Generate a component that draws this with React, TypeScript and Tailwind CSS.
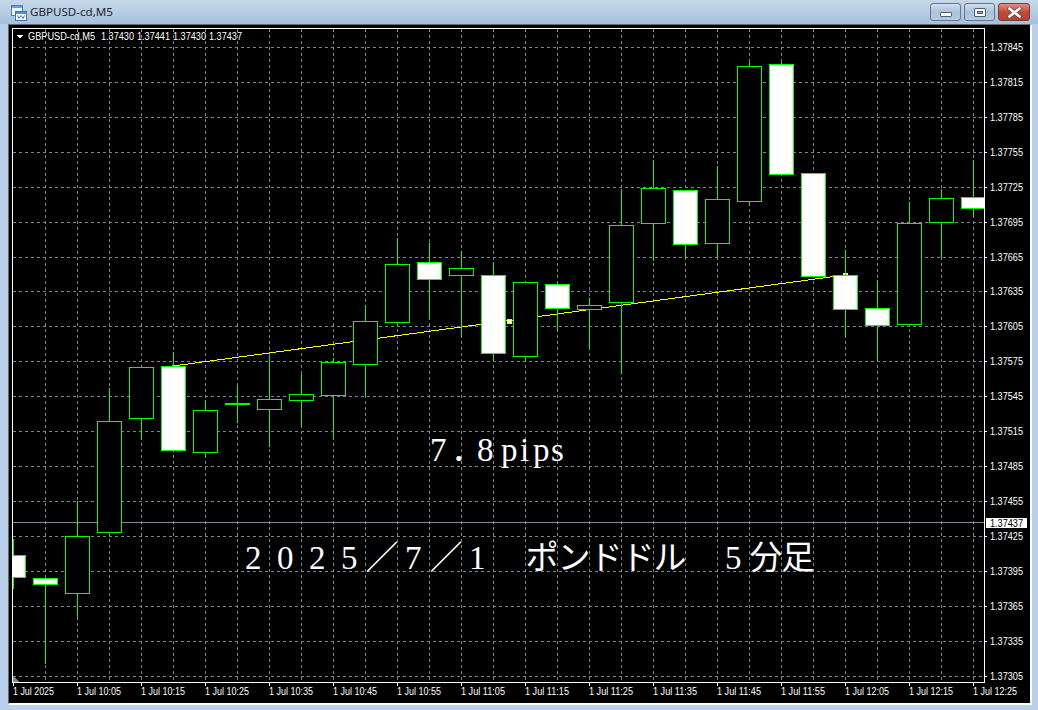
const candles: [number, number, number, number, number, boolean][] = [
  // x, high, top, bottom, low, white body
  [13, 539, 555, 577, 588, true],
  [45, 578, 578, 584, 663, true],
  [77, 501, 536, 593, 617, false],
  [109, 388, 421, 532, 532, false],
  [141, 367, 367, 418, 439, false],
  [173, 352, 366, 450, 450, true],
  [205, 400, 410, 452, 456, false],
  [269, 356, 399, 409, 446, false],
  [301, 374, 394, 400, 426, false],
  [333, 358, 362, 395, 438, false],
  [365, 305, 321, 364, 395, false],
  [397, 238, 264, 322, 325, false],
  [429, 243, 262, 279, 318, true],
  [461, 251, 268, 275, 336, false],
  [493, 262, 275, 353, 360, true],
  [525, 282, 282, 356, 361, false],
  [557, 284, 284, 308, 330, true],
  [589, 298, 305, 309, 348, false],
  [621, 189, 225, 302, 373, false],
  [653, 160, 188, 223, 260, false],
  [685, 190, 190, 244, 258, true],
  [717, 166, 199, 243, 258, false],
  [749, 62, 66, 201, 204, false],
  [781, 62, 64, 174, 174, true],
  [813, 173, 173, 276, 276, true],
  [845, 250, 275, 309, 336, true],
  [877, 280, 308, 325, 360, true],
  [909, 202, 223, 324, 324, false],
  [941, 189, 198, 222, 258, false],
  [973, 160, 197, 208, 216, true],
]

const gridXs = Array.from({ length: 30 }, (_, i) => 45 + i * 32)
const gridYs = Array.from({ length: 19 }, (_, i) => Math.floor(47.4 + i * 34.94))
const prices = gridYs.map((y, i) => ({ y, label: (1.37845 - i * 0.0003).toFixed(5) }))
const times = [
  "1 Jul 2025", "1 Jul 10:05", "1 Jul 10:15", "1 Jul 10:25", "1 Jul 10:35", "1 Jul 10:45", "1 Jul 10:55", "1 Jul 11:05",
  "1 Jul 11:15", "1 Jul 11:25", "1 Jul 11:35", "1 Jul 11:45", "1 Jul 11:55", "1 Jul 12:05", "1 Jul 12:15", "1 Jul 12:25",
]

const axisText = "fill-white text-[11px] [font-family:'Liberation_Sans',sans-serif]"
const bigText = "fill-white text-[33px] [font-family:'Liberation_Serif','Noto_Sans_CJK_JP',serif]"

// one x per character: half width digits sit in the middle of a 32px cell
const line2 = "2025／7／1　ポンドドル　5分足"
const line2Xs = [0, 1, 2, 3, 4, 5, 6, 7, 8, 9, 10, 11, 12, 13, 14, 15, 16, 17]
  .map((k) => 237.5 + k * 32 + ("2025715".includes(line2[k]) ? 7.5 : 0))
  .join(" ")

function Chart() {
  return (
    <svg viewBox="9 25 1021 678" className="block w-full h-full bg-black" shapeRendering="crispEdges">
      <defs>
        <clipPath id="plot">
          <rect x="13" y="29" width="971" height="653" />
        </clipPath>
      </defs>

      <g stroke="#778899" strokeDasharray="3 3">
        {gridXs.map((x) => (
          <line key={x} x1={x + 0.5} y1="29" x2={x + 0.5} y2="682" />
        ))}
        {gridYs.map((y) => (
          <line key={y} x1="13" y1={y + 0.5} x2="984" y2={y + 0.5} />
        ))}
      </g>

      <line x1="13" y1="522.5" x2="984" y2="522.5" stroke="#778899" />

      <line x1="173" y1="366" x2="845" y2="275" stroke="#ffff00" />
      <rect x="171.5" y="364.5" width="4" height="4" fill="#ffff00" />
      <rect x="507.5" y="319.5" width="4" height="4" fill="#fff" stroke="#ffff00" />
      <rect x="843.5" y="273.5" width="4" height="4" fill="#fff" stroke="#ffff00" />

      <g clipPath="url(#plot)" stroke="#00ff00">
        {candles.map(([x, high, top, bottom, low, white]) => (
          <g key={x}>
            <line x1={x + 0.5} y1={high} x2={x + 0.5} y2={low + 1} />
            <rect x={x - 11.5} y={top + 0.5} width="24" height={bottom - top} fill={white ? "#fff" : "#000"} />
          </g>
        ))}
        <line x1="237.5" y1="386" x2="237.5" y2="423" />
        <rect x="225" y="403" width="25" height="2" fill="#00ff00" stroke="none" />
      </g>

      <path d="M13 676 L19 682 L13 682 Z" fill="#778899" />

      <path d="M12.5 28.5 H984.5 V682.5 H12.5 Z" fill="none" stroke="#fff" />
      {prices.map((p) => (
        <g key={p.y}>
          <line x1="985" y1={p.y + 0.5} x2="987" y2={p.y + 0.5} stroke="#fff" />
          <text x="990" y={p.y + 4} textLength="33" lengthAdjust="spacingAndGlyphs" className={axisText}>
            {p.label}
          </text>
        </g>
      ))}
      {times.map((t, i) => (
        <g key={t}>
          <line x1={13.5 + i * 64} y1="683" x2={13.5 + i * 64} y2="686" stroke="#fff" />
          <text x={13 + i * 64} y="695" textLength={i === 0 ? 41 : 44} lengthAdjust="spacingAndGlyphs" className={axisText}>
            {t}
          </text>
        </g>
      ))}

      <rect x="986" y="518" width="41" height="10" fill="#fff" />
      <text x="990" y="527" textLength="33" lengthAdjust="spacingAndGlyphs" className="fill-black text-[11px] [font-family:'Liberation_Sans',sans-serif]">
        1.37437
      </text>

      <path d="M17 35 H23.5 L20 38.5 Z" fill="#fff" />
      <text x="28" y="40" textLength="67" lengthAdjust="spacingAndGlyphs" className="fill-white text-[10px] [font-family:'Liberation_Sans',sans-serif]">GBPUSD-cd,M5</text>
      <text x="101" y="40" textLength="33" lengthAdjust="spacingAndGlyphs" className={axisText}>1.37430</text>
      <text x="137" y="40" textLength="33" lengthAdjust="spacingAndGlyphs" className={axisText}>1.37441</text>
      <text x="173" y="40" textLength="33" lengthAdjust="spacingAndGlyphs" className={axisText}>1.37430</text>
      <text x="209" y="40" textLength="33" lengthAdjust="spacingAndGlyphs" className={axisText}>1.37437</text>

      <g shapeRendering="auto">
        <text x="430 451 477 501 520 533 551" y="461" className={bigText}>7．8pips</text>
        <text x={line2Xs} y="569" className={bigText}>{line2}</text>
      </g>
    </svg>
  )
}

function WindowIcon() {
  return (
    <svg width="16" height="16" viewBox="0 0 16 16" className="shrink-0">
      <rect x="0.5" y="0.5" width="11" height="10" fill="#eef5fc" stroke="#4d7fb8" />
      <rect x="1" y="1" width="10" height="2" fill="#6f9fd4" />
      <rect x="4.5" y="6.5" width="11" height="9" fill="#fff" stroke="#3f74b0" />
      <rect x="5" y="7" width="10" height="2" fill="#5c90cc" />
      <path d="M6.5 10.5 L8 13.5 L10 10.5 L12 13.5 L13.5 10.5" fill="none" stroke="#3f74b0" />
    </svg>
  )
}

export default function App() {
  return (
    <div className="w-[1038px] h-[710px] flex flex-col overflow-hidden bg-[#b9d1ea]">
      <div className="h-[24px] shrink-0 flex items-start pl-[11px] pr-[8px] bg-gradient-to-b from-[#c6d8ea] to-[#a6c1dc]">
        <div className="mt-[5px]">
          <WindowIcon />
        </div>
        <span className="ml-[3px] mt-[3px] text-[11.6px] leading-[18px] text-[#1a2530] [font-family:'Noto_Sans',sans-serif]">
          GBPUSD-cd,M5
        </span>
        <div className="ml-auto flex gap-[3px] mt-[3px]">
          <button className="w-[31px] h-[18px] flex items-center justify-center rounded-[3px] border border-[#64778f] bg-gradient-to-b from-[#d0dfee] via-[#a9c2db] to-[#b4cbe1]">
            <span className="block w-[12px] h-[5px] bg-white border border-[#55606e] rounded-[1px] mt-[4px]" />
          </button>
          <button className="w-[31px] h-[18px] flex items-center justify-center rounded-[3px] border border-[#64778f] bg-gradient-to-b from-[#d0dfee] via-[#a9c2db] to-[#b4cbe1]">
            <span className="flex items-center justify-center w-[12px] h-[9px] bg-white border border-[#55606e] rounded-[1px]">
              <span className="block w-[6px] h-[3px] bg-[#8fa5bb] border border-[#55606e]" />
            </span>
          </button>
          <button className="w-[32px] h-[18px] flex items-center justify-center rounded-[3px] border border-[#7c3a3a] bg-gradient-to-b from-[#dc8f84] via-[#c24a38] to-[#b8402f]">
            <svg width="15" height="11" viewBox="0 0 15 11">
              <path d="M2.5 1.5 L12.5 9.5 M12.5 1.5 L2.5 9.5" stroke="#5b4a48" strokeWidth="4" strokeLinecap="square" />
              <path d="M2.5 1.5 L12.5 9.5 M12.5 1.5 L2.5 9.5" stroke="#fff" strokeWidth="2.6" strokeLinecap="square" />
            </svg>
          </button>
        </div>
      </div>
      <div className="w-[1024px] h-[681px] ml-[8px] border-l border-t border-l-[#6b6b6b] border-t-[#6b6b6b] border-r-2 border-b-2 border-r-white border-b-white">
        <Chart />
      </div>
    </div>
  )
}
